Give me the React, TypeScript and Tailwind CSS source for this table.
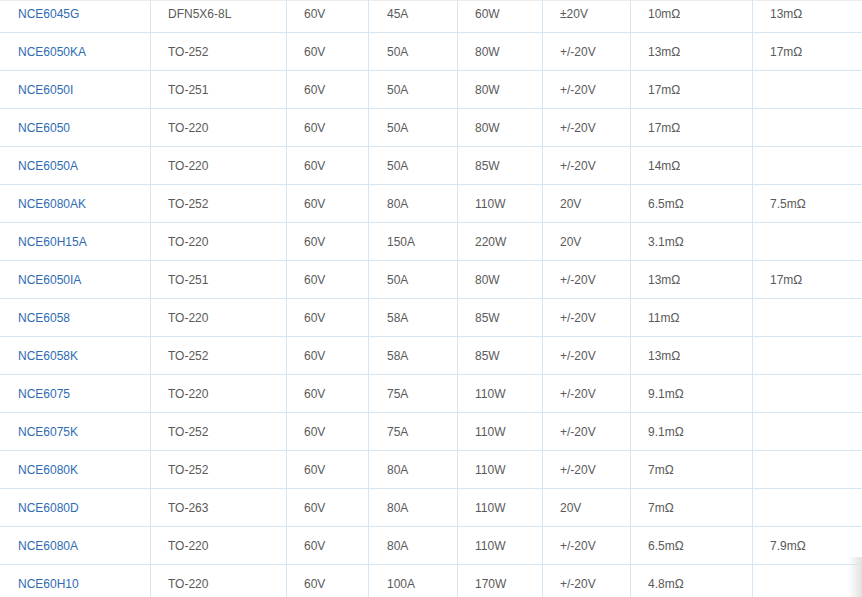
const rows: string[][] = [
  ['NCE6045G', 'DFN5X6-8L', '60V', '45A', '60W', '±20V', '10mΩ', '13mΩ'],
  ['NCE6050KA', 'TO-252', '60V', '50A', '80W', '+/-20V', '13mΩ', '17mΩ'],
  ['NCE6050I', 'TO-251', '60V', '50A', '80W', '+/-20V', '17mΩ', ''],
  ['NCE6050', 'TO-220', '60V', '50A', '80W', '+/-20V', '17mΩ', ''],
  ['NCE6050A', 'TO-220', '60V', '50A', '85W', '+/-20V', '14mΩ', ''],
  ['NCE6080AK', 'TO-252', '60V', '80A', '110W', '20V', '6.5mΩ', '7.5mΩ'],
  ['NCE60H15A', 'TO-220', '60V', '150A', '220W', '20V', '3.1mΩ', ''],
  ['NCE6050IA', 'TO-251', '60V', '50A', '80W', '+/-20V', '13mΩ', '17mΩ'],
  ['NCE6058', 'TO-220', '60V', '58A', '85W', '+/-20V', '11mΩ', ''],
  ['NCE6058K', 'TO-252', '60V', '58A', '85W', '+/-20V', '13mΩ', ''],
  ['NCE6075', 'TO-220', '60V', '75A', '110W', '+/-20V', '9.1mΩ', ''],
  ['NCE6075K', 'TO-252', '60V', '75A', '110W', '+/-20V', '9.1mΩ', ''],
  ['NCE6080K', 'TO-252', '60V', '80A', '110W', '+/-20V', '7mΩ', ''],
  ['NCE6080D', 'TO-263', '60V', '80A', '110W', '20V', '7mΩ', ''],
  ['NCE6080A', 'TO-220', '60V', '80A', '110W', '+/-20V', '6.5mΩ', '7.9mΩ'],
  ['NCE60H10', 'TO-220', '60V', '100A', '170W', '+/-20V', '4.8mΩ', ''],
];

// column widths include the 1px right border
const cols = [
  'w-[151px] pl-[18px] border-r',
  'w-[136px] pl-[17px] border-r',
  'w-[82px] pl-[17px] border-r',
  'w-[89px] pl-[18px] border-r',
  'w-[85px] pl-[17px] border-r',
  'w-[88px] pl-[17px] border-r',
  'w-[122px] pl-[17px] border-r',
  'w-[110px] pl-[17px]',
];

export default function App() {
  return (
    <div className="relative w-[862px] h-[597px] overflow-hidden bg-white font-['Liberation_Sans',Arial,sans-serif] text-[12px]">
      <div className="h-px bg-[#ececec]" />
      <div className="-mt-[6px]">
        {rows.map((row, i) => (
          <div key={i} className="flex h-[38px] border-b border-[#d5e6f5]">
            {row.map((cell, j) => (
              <div
                key={j}
                className={`${cols[j]} shrink-0 flex items-center border-[#d5e6f5] ${
                  j === 0 ? 'text-[#2e6bb3]' : 'text-[#5a5a5a]'
                }`}
              >
                {cell}
              </div>
            ))}
          </div>
        ))}
      </div>
      <div className="absolute right-0 bottom-0 w-[14px] h-[40px] bg-gradient-to-r from-transparent to-[#e2e2e2]" />
    </div>
  );
}
